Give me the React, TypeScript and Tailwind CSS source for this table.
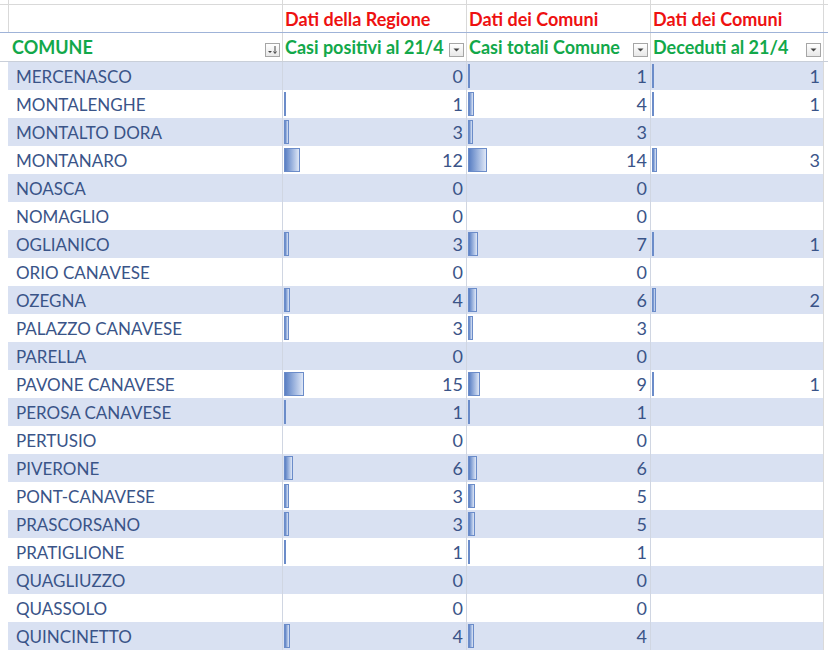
import React from 'react';

type Row = { name: string; reg: number; tot: number; dec: number | null };

const rows: Row[] = [
  { name: 'MERCENASCO', reg: 0, tot: 1, dec: 1 },
  { name: 'MONTALENGHE', reg: 1, tot: 4, dec: 1 },
  { name: 'MONTALTO DORA', reg: 3, tot: 3, dec: null },
  { name: 'MONTANARO', reg: 12, tot: 14, dec: 3 },
  { name: 'NOASCA', reg: 0, tot: 0, dec: null },
  { name: 'NOMAGLIO', reg: 0, tot: 0, dec: null },
  { name: 'OGLIANICO', reg: 3, tot: 7, dec: 1 },
  { name: 'ORIO CANAVESE', reg: 0, tot: 0, dec: null },
  { name: 'OZEGNA', reg: 4, tot: 6, dec: 2 },
  { name: 'PALAZZO CANAVESE', reg: 3, tot: 3, dec: null },
  { name: 'PARELLA', reg: 0, tot: 0, dec: null },
  { name: 'PAVONE CANAVESE', reg: 15, tot: 9, dec: 1 },
  { name: 'PEROSA CANAVESE', reg: 1, tot: 1, dec: null },
  { name: 'PERTUSIO', reg: 0, tot: 0, dec: null },
  { name: 'PIVERONE', reg: 6, tot: 6, dec: null },
  { name: 'PONT-CANAVESE', reg: 3, tot: 5, dec: null },
  { name: 'PRASCORSANO', reg: 3, tot: 5, dec: null },
  { name: 'PRATIGLIONE', reg: 1, tot: 1, dec: null },
  { name: 'QUAGLIUZZO', reg: 0, tot: 0, dec: null },
  { name: 'QUASSOLO', reg: 0, tot: 0, dec: null },
  { name: 'QUINCINETTO', reg: 4, tot: 4, dec: null },
];

const cols = 'grid grid-cols-[8px_274px_184px_184px_173px_5px]';

const FilterBtn = ({ sorted }: { sorted?: boolean }) => (
  <span className="absolute right-[2px] top-[10px] w-[15px] h-[14px] border border-[#a6a6a6] bg-gradient-to-b from-white to-[#e8e8e8] flex items-center justify-center">
    {sorted ? (
      <svg width="11" height="10" viewBox="0 0 11 10">
        <path d="M1 6h4l-2 2z" fill="#444" />
        <path d="M8 1v7M6.5 6.5L8 8.5 9.5 6.5" stroke="#444" strokeWidth="1" fill="none" />
      </svg>
    ) : (
      <svg width="7" height="4" viewBox="0 0 7 4">
        <path d="M0.5 0.5h6L3.5 3.5z" fill="#444" />
      </svg>
    )}
  </span>
);

const NumCell = ({ v, shaded }: { v: number | null; shaded: boolean }) => (
  <div className={`relative h-[28px] border-l border-[#d0d6e2] flex items-center justify-end pr-[3px] ${shaded ? 'bg-[#d9e1f2]' : 'bg-white'}`}>
    {v !== null && v > 0 && (
      <span
        className="absolute left-[1px] top-[2px] h-[24px] border border-[#6b8cc9] bg-gradient-to-r from-[#5a7fc3] to-[#dfe7f6]"
        style={{ width: Math.round(1 + v * 1.25) }}
      />
    )}
    {v !== null && <span>{v}</span>}
  </div>
);

export default function App() {
  return (
    <div className="w-[828px] h-[651px] overflow-hidden bg-white text-[18px] leading-none text-[#3a5488]" style={{ fontFamily: 'Lato, "Open Sans", sans-serif' }}>
      {/* top partial row */}
      <div className={`${cols} h-[5px] border-b border-[#d9d9d9]`}>
        <div />
        <div className="border-l border-[#d9d9d9]" />
        <div className="border-l border-[#d9d9d9]" />
        <div className="border-l border-[#d9d9d9]" />
        <div className="border-l border-[#d9d9d9]" />
        <div className="border-l border-[#d9d9d9]" />
      </div>

      {/* group titles */}
      <div className={`${cols} h-[28px] border-b border-[#9fb3d8] text-[#ee1111] font-bold`}>
        <div />
        <div className="border-l border-[#d9d9d9]" />
        <div className="border-l border-[#d9d9d9] flex items-center pl-[2px]">Dati della Regione</div>
        <div className="border-l border-[#d9d9d9] flex items-center pl-[2px]">Dati dei Comuni</div>
        <div className="border-l border-[#d9d9d9] flex items-center pl-[2px]">Dati dei Comuni</div>
        <div className="border-l border-[#d9d9d9]" />
      </div>

      {/* column headers */}
      <div className={`${cols} h-[29px] border-b border-[#c9cfd9] text-[#12a84a] font-bold`}>
        <div />
        <div className="relative flex items-center pl-[4px]">
          COMUNE
          <FilterBtn sorted />
        </div>
        <div className="relative border-l border-[#d9d9d9] flex items-center pl-[2px] whitespace-nowrap">
          Casi positivi al 21/4
          <FilterBtn />
        </div>
        <div className="relative border-l border-[#d9d9d9] flex items-center pl-[2px] whitespace-nowrap">
          Casi totali Comune
          <FilterBtn />
        </div>
        <div className="relative border-l border-[#d9d9d9] flex items-center pl-[2px] whitespace-nowrap">
          Deceduti al 21/4
          <FilterBtn />
        </div>
        <div className="border-l border-[#d9d9d9]" />
      </div>

      {/* data rows */}
      {rows.map((r, i) => {
        const shaded = i % 2 === 0;
        return (
          <div key={r.name} className={cols}>
            <div />
            <div className={`h-[28px] flex items-center pl-[8px] text-[17px] ${shaded ? 'bg-[#d9e1f2]' : 'bg-white'}`}>{r.name}</div>
            <NumCell v={r.reg} shaded={shaded} />
            <NumCell v={r.tot} shaded={shaded} />
            <NumCell v={r.dec} shaded={shaded} />
            <div className="border-l border-[#d9d9d9]" />
          </div>
        );
      })}
    </div>
  );
}
